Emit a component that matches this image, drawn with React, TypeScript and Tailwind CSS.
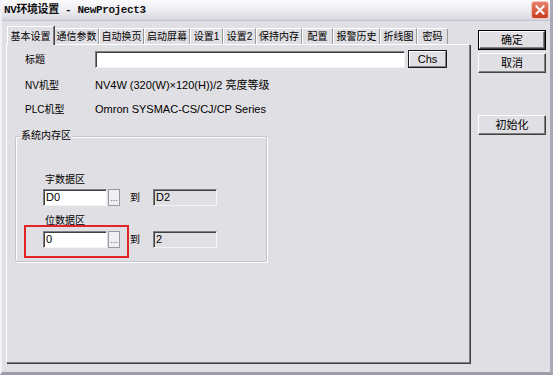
import React from 'react';

const ui = "font-['Liberation_Sans','Noto_Sans_CJK_SC',sans-serif]";

const tabs = [
  { label: '基本设置', w: 'w-[47px]' },
  { label: '通信参数', w: 'w-[45px]' },
  { label: '自动换页', w: 'w-[45px]' },
  { label: '启动屏幕', w: 'w-[46px]' },
  { label: '设置1', w: 'w-[33px]' },
  { label: '设置2', w: 'w-[33px]' },
  { label: '保持内存', w: 'w-[46px]' },
  { label: '配置', w: 'w-[31px]' },
  { label: '报警历史', w: 'w-[47px]' },
  { label: '折线图', w: 'w-[37px]' },
  { label: '密码', w: 'w-[31px]' },
];

const Field = ({ value, readOnly, w }: { value: string; readOnly?: boolean; w: string }) => (
  <div
    className={`${w} h-[17px] flex items-center pl-[2px] text-[11px] text-black border border-t-[#808080] border-l-[#808080] border-b-[#f4f4f4] border-r-[#f4f4f4] shadow-[inset_1px_1px_0_#404040] ${
      readOnly ? 'bg-[#e0dfe3]' : 'bg-white'
    }`}
  >
    {value}
  </div>
);

const DotsButton = () => (
  <div className="w-[12px] h-[17px] ml-[1px] flex items-end justify-center pb-[2px] bg-[#efeff2] border border-[#9a9aa5] text-[9px] leading-none text-[#555]">
    ...
  </div>
);

const Button = ({ label, isDefault, className = '' }: { label: string; isDefault?: boolean; className?: string }) => (
  <div
    className={`w-[68px] h-[20px] flex items-center justify-center text-[11px] text-black bg-[#e0dfe3] ${
      isDefault ? 'border border-black' : ''
    } ${className}`}
  >
    <div className="w-full h-full flex items-center justify-center border border-t-white border-l-white border-b-[#404040] border-r-[#404040] shadow-[inset_-1px_-1px_0_#808080]">
      {label}
    </div>
  </div>
);

export default function App() {
  return (
    <div className={`w-[553px] h-[375px] flex flex-col bg-[#e0dfe3] overflow-hidden border-l-2 border-l-[#f2f2f6] border-r-[3px] border-r-[#a9a9b8] border-b-[3px] border-b-[#9c9cad] ${ui}`}>
      {/* title bar */}
      <div className="h-[21px] shrink-0 flex items-center justify-between pl-[2px] pr-[1px] bg-gradient-to-b from-[#fbfbfd] via-[#eeeef3] to-[#d6d6e0] border-b border-[#c4c4d0]">
        <span className="text-[11px] font-bold text-[#111] font-['Liberation_Mono','Noto_Sans_CJK_SC',monospace] tracking-[-0.4px] whitespace-nowrap">
          NV环境设置 - NewProject3
        </span>
        <div className="w-[18px] h-[18px] rounded-[3px] border border-[#f5c4b8] bg-gradient-to-b from-[#e6836b] to-[#c9391e] flex items-center justify-center">
          <svg width="10" height="10" viewBox="0 0 10 10">
            <path d="M1.5 1.5 L8.5 8.5 M8.5 1.5 L1.5 8.5" stroke="white" strokeWidth="2" strokeLinecap="square" />
          </svg>
        </div>
      </div>

      <div className="flex flex-1">
        {/* left column: tabs + panel */}
        <div className="pl-[4px] pt-[5px] flex flex-col">
          <div className="flex items-end h-[18px] pl-[1px]">
            {tabs.map((t, i) =>
              i === 0 ? (
                <div
                  key={t.label}
                  className={`${t.w} h-[19px] -mb-px relative z-10 flex items-center justify-center whitespace-nowrap text-[10px] text-black bg-[#e0dfe3] border-t border-l border-white border-r border-r-[#808080] shadow-[1px_0_0_#404040]`}
                >
                  {t.label}
                </div>
              ) : (
                <div
                  key={t.label}
                  className={`${t.w} h-[16px] flex items-center justify-center whitespace-nowrap text-[10px] text-black border-t border-l border-white border-r border-r-[#9a9a9a]`}
                >
                  {t.label}
                </div>
              )
            )}
          </div>

          <div className="w-[464px] h-[319px] border border-t-white border-l-white border-r-[#808080] border-b-[#808080] shadow-[1px_1px_0_#404040] flex flex-col">
            <div className="flex items-center h-[18px] mt-[5px] pl-[18px] text-[10px] text-black">
              <span className="w-[70px]">标题</span>
              <Field value="" w="w-[310px]" />
              <div className="ml-[3px] w-[39px] h-[18px] border border-[#1a1a1a] bg-[#e0dfe3]">
                <div className="w-full h-full flex items-center justify-center text-[11px] border border-t-white border-l-white border-b-[#808080] border-r-[#808080]">
                  Chs
                </div>
              </div>
            </div>

            <div className="flex items-center h-[18px] mt-[8px] pl-[18px] text-[10px] text-black">
              <span className="w-[70px]">NV机型</span>
              <span className="text-[11px]">NV4W (320(W)×120(H))/2 亮度等级</span>
            </div>
            <div className="flex items-center h-[18px] mt-[6px] pl-[18px] text-[10px] text-black">
              <span className="w-[70px]">PLC机型</span>
              <span className="text-[11px]">Omron SYSMAC-CS/CJ/CP Series</span>
            </div>

            {/* group box */}
            <div className="relative ml-[8px] mt-[18px] w-[252px] h-[126px] rounded-[2px] border border-[#c4c4ce] shadow-[inset_1px_1px_0_#ffffff,1px_1px_0_#ffffff] flex flex-col pl-[27px]">
              <span className="absolute -top-[8px] left-[4px] px-[1px] bg-[#e0dfe3] text-[10px] leading-[14px] text-black">
                系统内存区
              </span>

              <span className="mt-[36px] pl-[2px] text-[10px] leading-[14px] text-black">字数据区</span>
              <div className="flex items-center mt-[2px]">
                <Field value="D0" w="w-[64px]" />
                <DotsButton />
                <span className="ml-[10px] w-[23px] text-[10px] text-black">到</span>
                <Field value="D2" readOnly w="w-[64px]" />
              </div>

              <span className="mt-[8px] pl-[2px] text-[10px] leading-[14px] text-black">位数据区</span>
              <div className="flex items-center mt-[3px]">
                <Field value="0" w="w-[64px]" />
                <DotsButton />
                <span className="ml-[10px] w-[23px] text-[10px] text-black">到</span>
                <Field value="2" readOnly w="w-[64px]" />
              </div>

              {/* red highlight annotation */}
              <div className="absolute left-[8px] top-[88px] w-[105px] h-[33px] border-2 border-[#e02427]" />
            </div>
          </div>
        </div>

        {/* right column: buttons */}
        <div className="pl-[8px] pt-[9px] flex flex-col">
          <Button label="确定" isDefault />
          <Button label="取消" className="mt-[3px]" />
          <Button label="初始化" className="mt-[42px]" />
        </div>
      </div>
    </div>
  );
}
